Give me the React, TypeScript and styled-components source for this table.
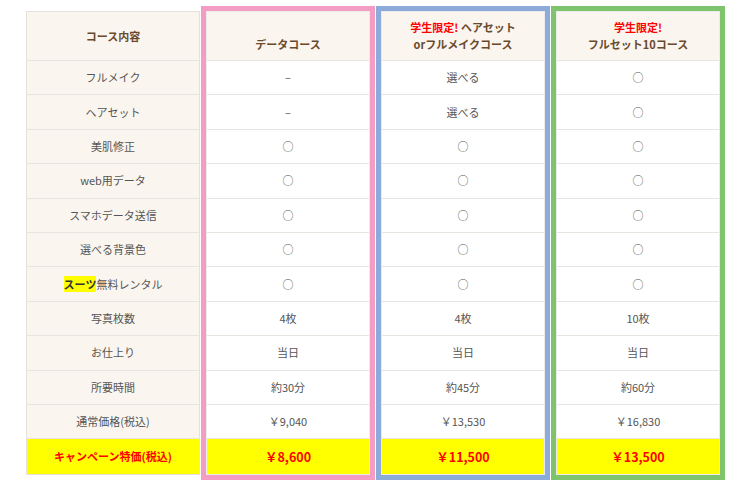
import styled, { createGlobalStyle } from 'styled-components';

type Course = {
    accent: string;
    note?: string;
    lines: string[];
    values: string[];
    sale: string;
};

const labels = [
    'フルメイク',
    'ヘアセット',
    '美肌修正',
    'web用データ',
    'スマホデータ送信',
    '選べる背景色',
    'SUIT',
    '写真枚数',
    'お仕上り',
    '所要時間',
    '通常価格(税込)',
];

const courses: Course[] = [
    {
        accent: '#f39dc4',
        lines: ['\u00a0', 'データコース'],
        values: ['–', '–', '○', '○', '○', '○', '○', '4枚', '当日', '約30分', '￥9,040'],
        sale: '￥8,600',
    },
    {
        accent: '#8dabda',
        note: '学生限定! ',
        lines: ['ヘアセット', 'orフルメイクコース'],
        values: ['選べる', '選べる', '○', '○', '○', '○', '○', '4枚', '当日', '約45分', '￥13,530'],
        sale: '￥11,500',
    },
    {
        accent: '#7fc36d',
        note: '学生限定!',
        lines: ['', 'フルセット10コース'],
        values: ['○', '○', '○', '○', '○', '○', '○', '10枚', '当日', '約60分', '￥16,830'],
        sale: '￥13,500',
    },
];

const App = () => {
    return (
        <>
            <GlobalStyle />
            <StyledTable>
                <StyledLabelColumn>
                    <StyledCell $kind="head">
                        <StyledHeadText>コース内容</StyledHeadText>
                    </StyledCell>
                    {labels.map((label) => (
                        <StyledCell key={label} $kind="label">
                            {label === 'SUIT' ? (
                                <span>
                                    <StyledMarker>スーツ</StyledMarker>無料レンタル
                                </span>
                            ) : (
                                label
                            )}
                        </StyledCell>
                    ))}
                    <StyledCell $kind="sale">
                        <StyledSaleLabel>キャンペーン特価(税込)</StyledSaleLabel>
                    </StyledCell>
                </StyledLabelColumn>

                {courses.map((course) => (
                    <StyledCourseColumn key={course.lines[1]} $accent={course.accent}>
                        <StyledCourseInner>
                            <StyledCell $kind="head">
                                <StyledHeadText>
                                    <StyledHeadLine>
                                        {course.note && <StyledNote>{course.note}</StyledNote>}
                                        {course.lines[0]}
                                    </StyledHeadLine>
                                    <StyledHeadLine>{course.lines[1]}</StyledHeadLine>
                                </StyledHeadText>
                            </StyledCell>
                            {course.values.map((value, i) => (
                                <StyledCell key={i} $kind="value">
                                    {value}
                                </StyledCell>
                            ))}
                            <StyledCell $kind="sale">
                                <StyledPrice>{course.sale}</StyledPrice>
                            </StyledCell>
                        </StyledCourseInner>
                    </StyledCourseColumn>
                ))}
            </StyledTable>
        </>
    );
};

const GlobalStyle = createGlobalStyle`
    body {
        margin: 0;
        background: #ffffff;
        font-family: "Noto Sans CJK JP", "Noto Sans", sans-serif;
        color: #555555;
    }
`;

const StyledTable = styled.div`
    display: flex;
    align-items: flex-start;
    padding: 6px 0 0 26px;
    gap: 1px;
`;

const StyledLabelColumn = styled.div`
    width: 174px;
    box-sizing: border-box;
    margin-top: 5px;
    border: 1px solid #e6e1dc;
    display: flex;
    flex-direction: column;
`;

const StyledCourseColumn = styled.div<{ $accent: string }>`
    width: 174px;
    box-sizing: border-box;
    border: 5px solid ${({ $accent }) => $accent};
`;

const StyledCourseInner = styled.div`
    border: 1px solid #ebebeb;
    display: flex;
    flex-direction: column;
`;

const cellBackground = {
    head: '#faf5ef',
    label: '#faf5ef',
    value: '#ffffff',
    sale: '#ffff00',
};

const StyledCell = styled.div<{ $kind: 'head' | 'label' | 'value' | 'sale' }>`
    box-sizing: border-box;
    height: ${({ $kind }) => ($kind === 'head' ? '49px' : '34.4px')};
    display: flex;
    align-items: center;
    justify-content: center;
    text-align: center;
    font-size: 11px;
    line-height: 17px;
    color: #555555;
    background: ${({ $kind }) => cellBackground[$kind]};
    border-bottom: ${({ $kind }) => ($kind === 'sale' ? 'none' : '1px solid #e8e4df')};
`;

const StyledHeadText = styled.div`
    font-weight: 700;
    color: #6a4a2c;
`;

const StyledHeadLine = styled.div`
    min-height: 17px;
    white-space: nowrap;
`;

const StyledNote = styled.span`
    color: #ff0000;
`;

const StyledMarker = styled.span`
    background: #ffff00;
    font-weight: 700;
    color: #333333;
`;

const StyledSaleLabel = styled.span`
    font-weight: 700;
    color: #ff0000;
`;

const StyledPrice = styled.span`
    font-weight: 700;
    font-size: 12.5px;
    color: #ff0000;
`;

export default App;
